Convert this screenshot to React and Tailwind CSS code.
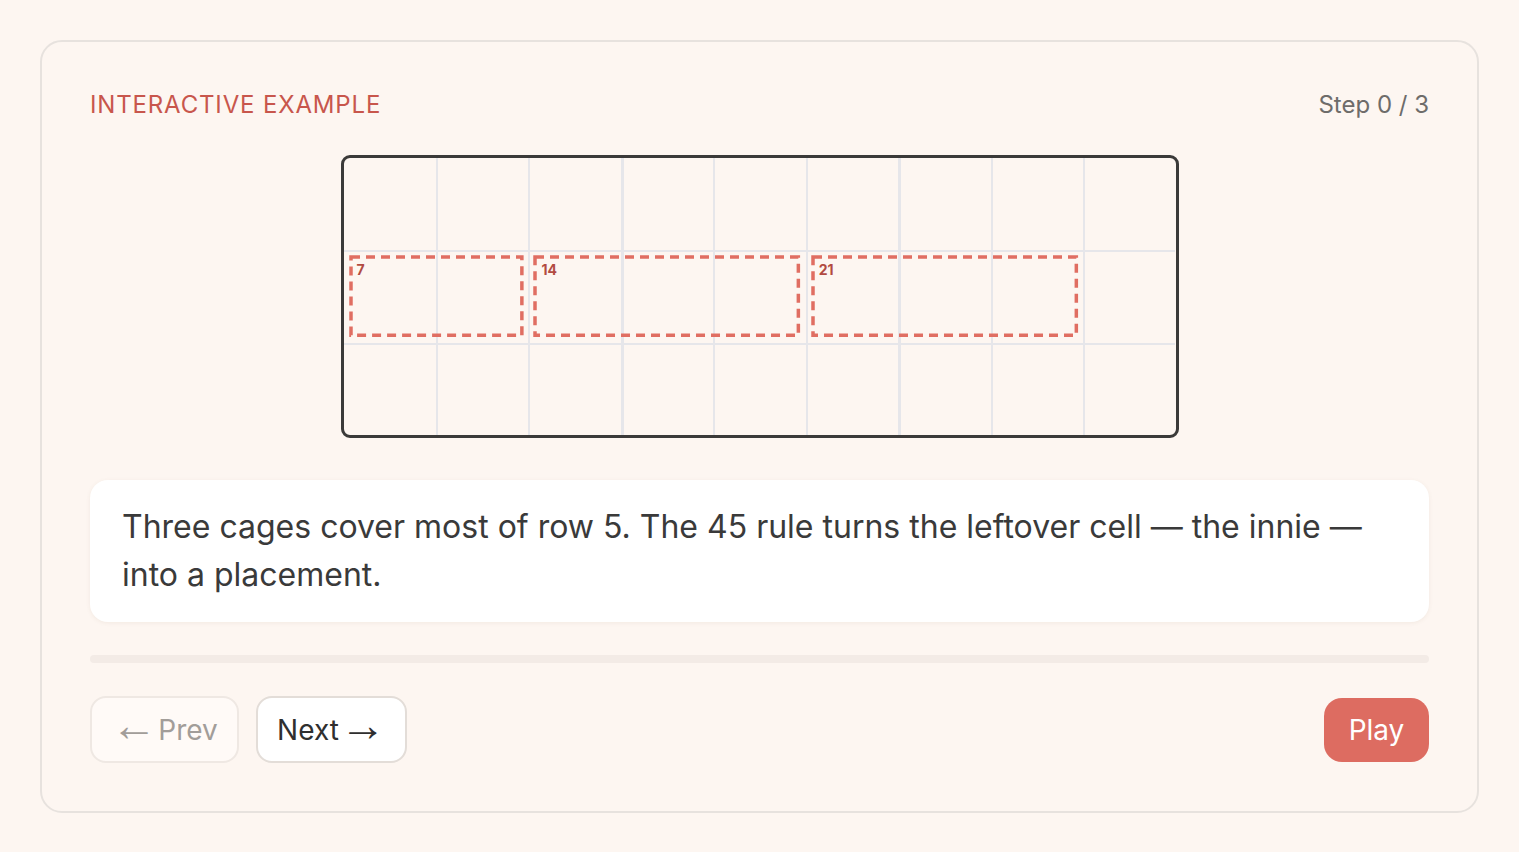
import { useState } from 'react';

const cages = [
  { sum: 7, span: 'col-start-1 col-end-3' },
  { sum: 14, span: 'col-start-3 col-end-6' },
  { sum: 21, span: 'col-start-6 col-end-9' },
];

const arrow = "inline-block align-middle font-['Liberation_Sans',sans-serif] text-[46px] leading-none -translate-y-[5px]";

const Board = () => {
  const cells = Array.from({ length: 27 }, (_, i) => i);

  return (
    <div className="relative w-[838px] h-[283px] mx-auto border-[3px] border-[#3b3a39] rounded-[9px] overflow-hidden">
      <div className="grid grid-cols-9 grid-rows-3 w-full h-full">
        {cells.map((i) => {
          const col = i % 9;
          const row = Math.floor(i / 9);
          const left = col === 0 ? '' : col === 3 || col === 6 ? 'border-l-[3px]' : 'border-l-2';
          const top = row === 0 ? '' : 'border-t-2';
          return <div key={i} className={`border-[#e6e6ea] ${left} ${top}`} />;
        })}
      </div>
      {/* cage overlay sits on row 2 */}
      <div className="absolute inset-0 grid grid-cols-9 grid-rows-3 pointer-events-none">
        {cages.map((c) => (
          <div key={c.sum} className={`${c.span} row-start-2 m-[5px] relative`}>
            <svg className="absolute inset-0 w-full h-full overflow-visible">
              <rect
                x="2"
                y="2"
                width="calc(100% - 4px)"
                height="calc(100% - 4px)"
                fill="none"
                stroke="#e06e62"
                strokeWidth="3.5"
                strokeDasharray="9 6"
              />
            </svg>
            <span className="absolute left-[8px] top-[8px] text-[14px] font-bold leading-none text-[#b24b42]">
              {c.sum}
            </span>
          </div>
        ))}
      </div>
    </div>
  );
};

const App = () => {
  const [step, setStep] = useState(0);

  return (
    <div className="min-h-screen bg-[#fdf6f1] p-10 font-['Inter',sans-serif]">
      <div className="rounded-[22px] border-2 border-[#e7e2de] px-12 pt-12 pb-12">
        <div className="flex items-center justify-between h-[30px]">
          <span className="text-[24px] tracking-[0.035em] text-[#c8564c]">INTERACTIVE EXAMPLE</span>
          <span className="text-[24px] text-[#6e6c6a]">Step {step} / 3</span>
        </div>

        <div className="mt-[35px]">
          <Board />
        </div>

        <div className="mt-[42px] bg-white rounded-[18px] px-8 py-[23px] shadow-[0_1px_4px_rgba(120,90,70,0.08)]">
          <p className="text-[32px] leading-[48px] text-[#3a3a3a]">
            Three cages cover most of row 5. The 45 rule turns the leftover cell — the innie — into a placement.
          </p>
        </div>

        <div className="mt-[33px] h-[8px] rounded-full bg-[#f3ebe6]" />

        <div className="mt-[33px] flex items-center justify-between">
          <div className="flex gap-[17px]">
            <button
              disabled={step === 0}
              onClick={() => setStep((s) => Math.max(0, s - 1))}
              className="flex items-center justify-center gap-[1px] h-[67px] w-[149px] rounded-[16px] border-2 border-[#efe8e3] bg-[#fffaf7] text-[28px] text-[#a29d99]"
            >
              <span className={arrow}>←</span>
              <span>Prev</span>
            </button>
            <button
              onClick={() => setStep((s) => Math.min(3, s + 1))}
              className="flex items-center justify-center gap-[1px] h-[67px] w-[151px] rounded-[16px] border-2 border-[#e3ddd8] bg-white text-[28px] text-[#2f2f2f]"
            >
              <span>Next</span>
              <span className={arrow}>→</span>
            </button>
          </div>
          <button className="h-[64px] w-[105px] rounded-[18px] bg-[#dd6c61] text-[28px] text-white">
            Play
          </button>
        </div>
      </div>
    </div>
  );
};

export default App;
